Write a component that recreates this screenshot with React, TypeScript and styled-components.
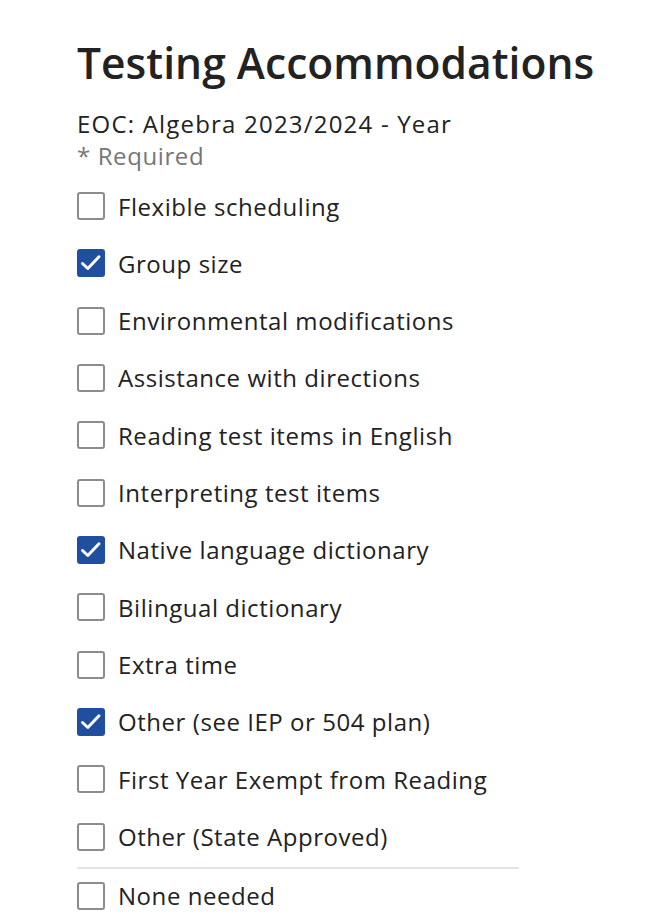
import styled, { createGlobalStyle } from "styled-components"

const GlobalStyle = createGlobalStyle`
    html, body {
        margin: 0;
        padding: 0;
        background: #fff;
    }
    body {
        font-family: "Open Sans", "Liberation Sans", sans-serif;
        color: #222;
    }
`

const options = [
    { label: "Flexible scheduling", checked: false },
    { label: "Group size", checked: true },
    { label: "Environmental modifications", checked: false },
    { label: "Assistance with directions", checked: false },
    { label: "Reading test items in English", checked: false },
    { label: "Interpreting test items", checked: false },
    { label: "Native language dictionary", checked: true },
    { label: "Bilingual dictionary", checked: false },
    { label: "Extra time", checked: false },
    { label: "Other (see IEP or 504 plan)", checked: true },
    { label: "First Year Exempt from Reading", checked: false },
    { label: "Other (State Approved)", checked: false },
]

export default function App() {
    return <>
        <GlobalStyle />
        <Page>
            <Title>Testing Accommodations</Title>
            <Subtitle>EOC: Algebra 2023/2024 - Year</Subtitle>
            <Required>* Required</Required>

            <List>
                {options.map(o => (
                    <Option key={o.label}>
                        <Box checked={o.checked}>
                            {o.checked && <Check />}
                        </Box>
                        <span>{o.label}</span>
                    </Option>
                ))}
            </List>

            <Divider />

            <Option>
                <Box checked={false} />
                <span>None needed</span>
            </Option>
        </Page>
    </>
}

function Check() {
    return <svg width="24" height="24" viewBox="0 0 24 24">
        <path d="M3.5 12.5 L8.8 17.5 L20 5.8" fill="none" stroke="#fff" strokeWidth="3" strokeLinecap="round" strokeLinejoin="round" />
    </svg>
}

const Page = styled.div`
    padding: 38px 0 0 77px;
    width: 442px;
`

const Title = styled.h1`
    margin: 0 0 20px;
    font-size: 42.5px;
    font-weight: 600;
    letter-spacing: 0.05px;
    line-height: 50px;
    color: #222;
    white-space: nowrap;
`

const Subtitle = styled.div`
    font-size: 24px;
    line-height: 32px;
    letter-spacing: 1.2px;
    color: #222;
`

const Required = styled.div`
    font-size: 24px;
    line-height: 32px;
    letter-spacing: 0.6px;
    color: #767676;
    margin-bottom: 20px;
`

const List = styled.div`
    display: flex;
    flex-direction: column;
    gap: 29.33px;
`

const Option = styled.label`
    display: flex;
    align-items: center;
    gap: 13px;
    height: 28px;
    font-size: 24px;
    letter-spacing: 0.55px;
    color: #222;
    white-space: nowrap;
`

const Box = styled.span<{ checked: boolean }>`
    flex: none;
    width: 28px;
    height: 28px;
    box-sizing: border-box;
    border-radius: 3px;
    border: 2px solid ${props => props.checked ? "#1f4f9e" : "#8c8c8c"};
    background: ${props => props.checked ? "#1f4f9e" : "#fff"};
    display: flex;
    align-items: center;
    justify-content: center;
`

const Divider = styled.div`
    height: 2px;
    background: #e3e3e3;
    margin: 16px 0 13px;
`
